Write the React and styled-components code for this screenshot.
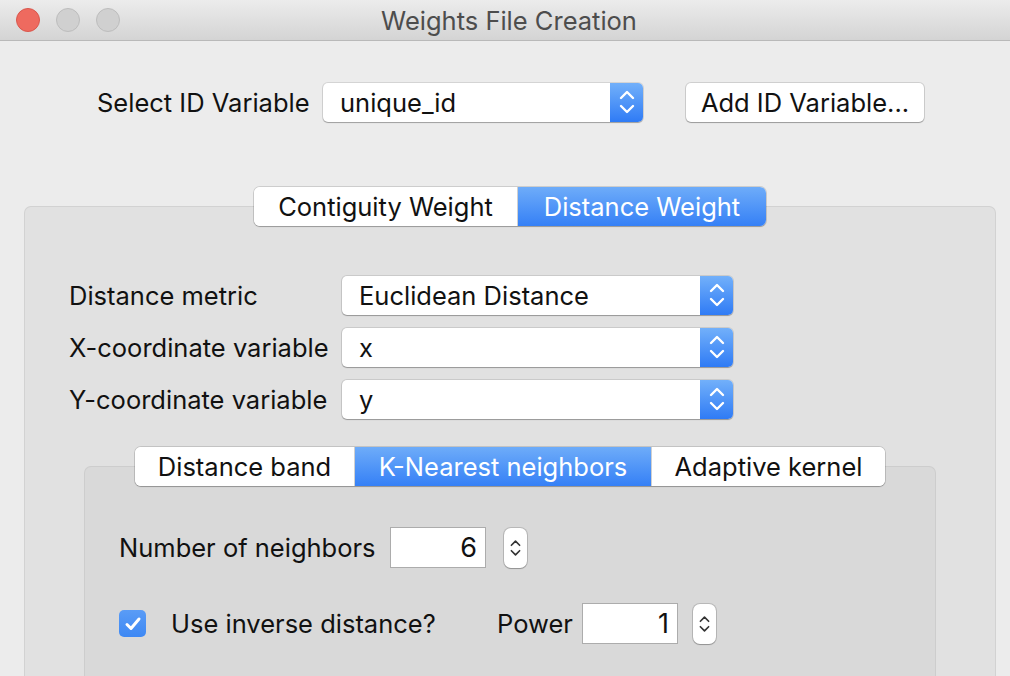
import React from 'react'
import styled, { createGlobalStyle } from 'styled-components'

const GlobalStyle = createGlobalStyle`
  html, body {
    margin: 0;
    padding: 0;
  }
  body {
    font-family: Inter, "Noto Sans", sans-serif;
  }
`

const Window = styled.div`
  width: 1010px;
  height: 676px;
  overflow: hidden;
  background: #ececec;
  display: flex;
  flex-direction: column;
  font-family: Inter, "Noto Sans", sans-serif;
  font-size: 25.5px;
  color: #111;
`

const TitleBar = styled.div`
  flex: none;
  height: 40px;
  padding: 0 16px;
  border-bottom: 1px solid #b9b9b9;
  background: linear-gradient(#ececec, #d4d4d4);
  display: grid;
  grid-template-columns: 1fr auto 1fr;
  align-items: center;
`

const Lights = styled.div`
  display: flex;
  gap: 16px;
`

const Light = styled.span`
  width: 24px;
  height: 24px;
  border-radius: 50%;
  box-sizing: border-box;
  background: ${p => (p.$red ? '#ee6a5f' : '#d0d0d0')};
  border: 1px solid ${p => (p.$red ? '#d9574d' : '#bdbdbd')};
`

const Title = styled.div`
  color: #4d4d4d;
  padding-left: 8px;
`

const IdRow = styled.div`
  margin-top: 41px;
  padding-left: 97px;
  height: 40px;
  display: flex;
  align-items: center;
`

const Label = styled.span`
  white-space: nowrap;
  flex: none;
  width: ${p => (p.$w ? `${p.$w}px` : 'auto')};
`

const SelectBox = styled.div`
  width: ${p => p.$w}px;
  height: 39px;
  display: flex;
  border-radius: 5px;
  box-shadow: 0 0 0 1px rgba(0, 0, 0, 0.1), 0 1px 1px rgba(0, 0, 0, 0.25);
  background: #fff;
`

const SelectText = styled.div`
  flex: 1;
  display: flex;
  align-items: center;
  padding-left: 17px;
`

const SelectArrow = styled.div`
  width: 33px;
  border-radius: 0 5px 5px 0;
  background: linear-gradient(#72b0fa, #2f7bf5);
  display: flex;
  align-items: center;
  justify-content: center;
`

const PushButton = styled.button`
  margin-left: 43px;
  width: 238px;
  height: 39px;
  border: none;
  border-radius: 5px;
  background: #fff;
  box-shadow: 0 0 0 1px rgba(0, 0, 0, 0.12), 0 1px 1px rgba(0, 0, 0, 0.25);
  font: inherit;
  color: #111;
  padding: 0;
`

const TabGroup = styled.div`
  display: flex;
  flex-direction: column;
  align-items: center;
  flex: ${p => (p.$grow ? 1 : 'none')};
  margin: ${p => p.$margin};
`

const Segmented = styled.div`
  position: relative;
  z-index: 1;
  display: flex;
  height: 39px;
  margin-bottom: -20px;
  border-radius: 6px;
  overflow: hidden;
  background: #fff;
  box-shadow: 0 0 0 1px rgba(0, 0, 0, 0.13), 0 1px 1px rgba(0, 0, 0, 0.22);
`

const Segment = styled.div`
  width: ${p => p.$w}px;
  display: flex;
  align-items: center;
  justify-content: center;
  white-space: nowrap;
  color: ${p => (p.$on ? '#fff' : '#111')};
  background: ${p => (p.$on ? 'linear-gradient(#6eacf9, #3580f6)' : '#fff')};
  & + & {
    border-left: 1px solid #d0d0d0;
  }
`

const Panel = styled.div`
  align-self: stretch;
  flex: 1;
  border: 1px solid ${p => p.$line};
  border-bottom: none;
  border-radius: 7px 7px 0 0;
  background: ${p => p.$bg};
  padding-top: ${p => p.$top}px;
  display: flex;
  flex-direction: column;
`

const FormGrid = styled.div`
  margin-left: 44px;
  display: grid;
  grid-template-columns: 273px 391px;
  grid-auto-rows: 40px;
  row-gap: 12px;
  align-items: center;
`

const FieldRow = styled.div`
  margin-left: 34px;
  margin-top: ${p => p.$top || 0}px;
  height: 41px;
  display: flex;
  align-items: center;
`

const NumberField = styled.div`
  width: 96px;
  height: 41px;
  box-sizing: border-box;
  border: 1px solid #acacac;
  background: #fff;
  display: flex;
  align-items: center;
  justify-content: flex-end;
  padding-right: 8px;
  font-size: 27px;
`

const Stepper = styled.div`
  margin-left: ${p => p.$gap}px;
  width: 23px;
  height: 40px;
  box-sizing: border-box;
  border-radius: 7px;
  background: #fff;
  box-shadow: 0 0 0 1px rgba(0, 0, 0, 0.15), 0 1px 1px rgba(0, 0, 0, 0.2);
  display: flex;
  align-items: center;
  justify-content: center;
`

const CheckBox = styled.div`
  width: 27px;
  height: 27px;
  border-radius: 5px;
  background: linear-gradient(#5a9cf6, #3d88f4);
  display: flex;
  align-items: center;
  justify-content: center;
  margin-right: 25px;
`

const Chevrons = ({ color = '#fff', w = 16, h = 26, sw = 2.4 }) => (
  <svg width={w} height={h} viewBox="0 0 16 26" fill="none">
    <path d="M2 9 L8 3 L14 9" stroke={color} strokeWidth={sw} strokeLinecap="round" strokeLinejoin="round" />
    <path d="M2 17 L8 23 L14 17" stroke={color} strokeWidth={sw} strokeLinecap="round" strokeLinejoin="round" />
  </svg>
)

const Select = ({ w, value }) => (
  <SelectBox $w={w}>
    <SelectText>{value}</SelectText>
    <SelectArrow>
      <Chevrons />
    </SelectArrow>
  </SelectBox>
)

const Spin = ({ gap }) => (
  <Stepper $gap={gap}>
    <Chevrons color="#333" w={11} h={26} sw={2.4} />
  </Stepper>
)

const fields = [
  ['Distance metric', 'Euclidean Distance'],
  ['X-coordinate variable', 'x'],
  ['Y-coordinate variable', 'y'],
]

export default function App() {
  return (
    <>
      <GlobalStyle />
      <Window>
        <TitleBar>
          <Lights>
            <Light $red />
            <Light />
            <Light />
          </Lights>
          <Title>Weights File Creation</Title>
          <span />
        </TitleBar>

        <IdRow>
          <Label $w={226}>Select ID Variable</Label>
          <Select w={320} value="unique_id" />
          <PushButton>Add ID Variable...</PushButton>
        </IdRow>

        <TabGroup $grow $margin="65px 14px 0 24px">
          <Segmented>
            <Segment $w={263}>Contiguity Weight</Segment>
            <Segment $w={248} $on>Distance Weight</Segment>
          </Segmented>
          <Panel $bg="#e1e1e1" $line="#d2d2d2" $top={68}>
            <FormGrid>
              {fields.map(([label, value]) => (
                <React.Fragment key={label}>
                  <Label>{label}</Label>
                  <Select w={391} value={value} />
                </React.Fragment>
              ))}
            </FormGrid>

            <TabGroup $grow $margin="28px 59px 0 59px">
              <Segmented>
                <Segment $w={219}>Distance band</Segment>
                <Segment $w={296} $on>K-Nearest neighbors</Segment>
                <Segment $w={233}>Adaptive kernel</Segment>
              </Segmented>
              <Panel $bg="#d9d9d9" $line="#cdcdcd" $top={60}>
                <FieldRow>
                  <Label $w={271}>Number of neighbors</Label>
                  <NumberField>6</NumberField>
                  <Spin gap={18} />
                </FieldRow>
                <FieldRow $top={35}>
                  <CheckBox>
                    <svg width="18" height="16" viewBox="0 0 18 16" fill="none">
                      <path d="M3 8.5 L7 12.5 L15 3" stroke="#fff" strokeWidth="3" strokeLinecap="round" strokeLinejoin="round" />
                    </svg>
                  </CheckBox>
                  <Label $w={326}>Use inverse distance?</Label>
                  <Label $w={85}>Power</Label>
                  <NumberField>1</NumberField>
                  <Spin gap={15} />
                </FieldRow>
              </Panel>
            </TabGroup>
          </Panel>
        </TabGroup>
      </Window>
    </>
  )
}
